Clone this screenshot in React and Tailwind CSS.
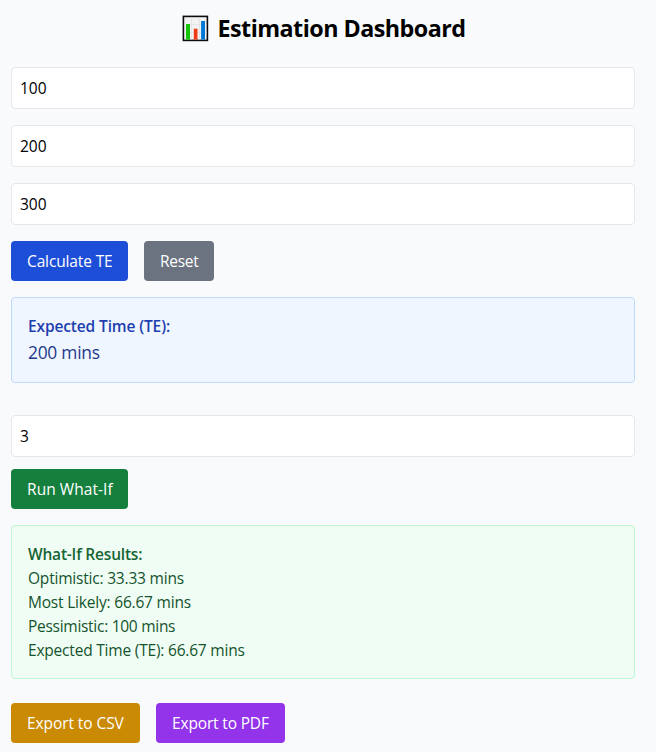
const input = "block h-[42px] w-full rounded border border-[#e5e7eb] bg-white p-2 text-[15.5px] leading-6 text-black outline-none";
const button = "h-10 rounded pl-4 text-left text-[15.5px] leading-6 text-white whitespace-nowrap";

function ChartIcon() {
  return (
    <svg className="h-7 w-7 shrink-0" viewBox="0 0 28 28">
      <rect x="2.4" y="2.4" width="24" height="24" fill="#f2f2f2" stroke="#0c0c0f" strokeWidth="1.6" />
      <path d="M10.5 3.2v22.4M18.5 3.2v22.4M3.2 10.5h22.4M3.2 18.5h22.4" stroke="#e1e1e3" strokeWidth="0.7" />
      <rect x="5" y="10" width="4" height="15.6" fill="#16c60c" />
      <rect x="12.8" y="14.7" width="3.7" height="10.9" fill="#f03a17" />
      <rect x="20.1" y="7" width="3.9" height="18.6" fill="#0078d7" />
    </svg>
  );
}

export default function App() {
  return (
    <main className="h-[752px] overflow-hidden bg-[#f9fafb] pl-[11px] pr-[21px] pt-3 font-['Open_Sans','Noto_Sans',sans-serif] text-black">
      <h1 className="flex h-8 items-center justify-center gap-[9px] whitespace-nowrap text-[23.3px] leading-8 font-bold tracking-[-0.53px]">
        <ChartIcon />
        <span>Estimation Dashboard</span>
      </h1>
      <div className="mt-[23px] flex flex-col gap-4">
        <input className={input} defaultValue="100" />
        <input className={input} defaultValue="200" />
        <input className={input} defaultValue="300" />
      </div>
      <div className="mt-4 flex gap-4">
        <button className={`${button} w-[117px] bg-[#1d4ed8] tracking-[-0.13px]`}>Calculate TE</button>
        <button className={`${button} w-[70px] bg-[#6b7280] tracking-[-0.3px]`}>Reset</button>
      </div>
      <section className="mt-4 h-[86px] rounded border border-[#bfdbfe] bg-[#eff6ff] p-4">
        <h2 className="text-[15.5px] font-semibold leading-6 tracking-[-0.13px] text-[#1e40af]">Expected Time (TE):</h2>
        <p className="text-[17.4px] leading-7 tracking-[-0.26px] text-[#1e3a8a]">200 mins</p>
      </section>
      <input className={`${input} mt-8`} defaultValue="3" />
      <button className={`${button} mt-3 block w-[117px] bg-[#15803d] tracking-[0.06px]`}>Run What-If</button>
      <section className="mt-4 h-[154px] rounded border border-[#bbf7d0] bg-[#f0fdf4] p-4 text-[15.5px] leading-6 tracking-[-0.2px] text-[#14532d]">
        <h2 className="font-semibold text-[#166534]">What-If Results:</h2>
        <p>Optimistic: 33.33 mins</p>
        <p>Most Likely: 66.67 mins</p>
        <p className="tracking-[-0.28px]">Pessimistic: 100 mins</p>
        <p>Expected Time (TE): 66.67 mins</p>
      </section>
      <div className="mt-6 flex gap-4">
        <button className={`${button} w-[129px] bg-[#ca8a04] tracking-[-0.08px]`}>Export to CSV</button>
        <button className={`${button} w-[129px] bg-[#9333ea] tracking-[-0.16px]`}>Export to PDF</button>
      </div>
    </main>
  );
}
